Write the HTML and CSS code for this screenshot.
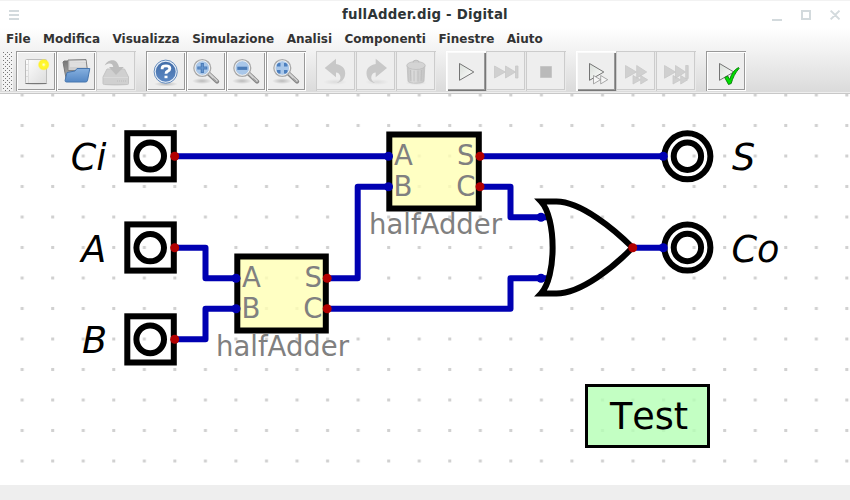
FILE: index.html
```
<!DOCTYPE html>
<html lang="it">
<head>
<meta charset="utf-8">
<title>fullAdder.dig - Digital</title>
<link rel="stylesheet" href="styles.css">
</head>
<body>
<svg class="defs" width="0" height="0" aria-hidden="true">
  <defs>
    <linearGradient id="paper" x1="0" y1="0" x2="1" y2="1"><stop offset="0" stop-color="#fff"/><stop offset="1" stop-color="#dcdcdc"/></linearGradient>
    <radialGradient id="glow"><stop offset="0" stop-color="#fffff0"/><stop offset=".35" stop-color="#fff830"/><stop offset=".75" stop-color="#fff22a"/><stop offset="1" stop-color="#fff22a" stop-opacity="0"/></radialGradient>
    <linearGradient id="folder" x1="0" y1="0" x2="0" y2="1"><stop offset="0" stop-color="#86b0df"/><stop offset="1" stop-color="#5487c4"/></linearGradient>
    <linearGradient id="back" x1="0" y1="0" x2="0" y2="1"><stop offset="0" stop-color="#777"/><stop offset="1" stop-color="#b5b5b5"/></linearGradient>
    <linearGradient id="help" x1="0" y1="0" x2="0" y2="1"><stop offset="0" stop-color="#426da8"/><stop offset="1" stop-color="#5c88c3"/></linearGradient>
    <radialGradient id="shadow"><stop offset="0" stop-color="#000" stop-opacity=".22"/><stop offset="1" stop-color="#000" stop-opacity="0"/></radialGradient>
    <linearGradient id="play" x1="0" y1="0" x2="1" y2="1"><stop offset="0" stop-color="#d9ded9"/><stop offset="1" stop-color="#fff"/></linearGradient>
    <linearGradient id="bin"><stop offset="0" stop-color="#c2c2c2"/><stop offset=".35" stop-color="#dedede"/><stop offset="1" stop-color="#c2c2c2"/></linearGradient>
    <g id="lens">
      <ellipse cx="16" cy="29" rx="10" ry="3" fill="url(#shadow)"/>
      <path d="M22.5 21.5 31 29.5" stroke="#888" stroke-width="4.400" stroke-linecap="round"/>
      <path d="M22.5 21 30.7 28.9" stroke="#d2d2d2" stroke-width="2.2" stroke-linecap="round"/>
      <path d="m27 26.5 3.5 3" stroke="#969696" stroke-width="1"/>
      <circle cx="16.3" cy="16" r="8.2" fill="#a9c7e9" stroke="#aaa" stroke-width="1.8"/>
      <circle cx="16.3" cy="16" r="7.3" fill="none" stroke="#f5f5f5" stroke-width="1"/>
    </g>
    <path id="undo" d="M8.7 16 20 6.7V12c6 1 9.4 4.500 9.200 9.500C29 27 25.500 30.500 20.500 31c3-1.500 4.300-3.700 3.900-6.300C24 22 22 20.600 20 20.500V25.300Z"/>
  </defs>
</svg>

<div class="window">
  <header class="titlebar">
    <svg class="grip" viewBox="0 0 10 10"><path d="M0 1h10M0 5h10M0 9h10"/></svg>
    <h1>fullAdder.dig - Digital</h1>
    <svg class="controls" viewBox="0 0 70 12"><path d="M1 11h10M31 2h8v8h-8zM59.700 1.600l8.800 8.800M68.500 1.600l-8.800 8.800"/></svg>
  </header>

  <div class="chrome">
    <nav class="menu">
      <span>File</span><span>Modifica</span><span>Visualizza</span><span>Simulazione</span><span>Analisi</span><span>Componenti</span><span>Finestre</span><span>Aiuto</span>
    </nav>
    <div class="toolbar">
      <div class="handle"></div>
      <div class="group">
        <button><svg viewBox="1 1 37 37"><ellipse cx="20.500" cy="31.500" rx="13" ry="2" fill="url(#shadow)"/><rect x="9.500" y="7.500" width="21" height="24" rx="1" fill="url(#paper)" stroke="#bcbcbc"/><path d="M9.500 31.500h21" stroke="#777"/><path d="M12.500 8v23" stroke="#d4d4d4" stroke-width=".7"/><path d="M11 12v16" stroke="#c4c4c4" stroke-dasharray="1 5"/><circle cx="27.700" cy="12.700" r="6" fill="url(#glow)"/></svg></button>
        <button><svg viewBox="1 1 37 37"><path d="M7 10 8 9h7l1 2h14l-1 18H10.500Z" fill="url(#back)" stroke="#777"/><path d="m12 8 18-.5 1.500 11H12Z" fill="#cfcfcf" stroke="#858585"/><path d="m14 10 16-.2M14 12h16M14 14h16" stroke="#eee"/><path d="M11 20.500 19 19l2-2.500h12.800L31.500 28.500q-.3 1.500-2 1.500h-19q-1.500 0-1.400-1.500Z" fill="url(#folder)" stroke="#4776ae"/></svg></button>
        <button class="off"><svg viewBox="1 1 37 37"><ellipse cx="20" cy="33" rx="13" ry="1.500" fill="url(#shadow)" opacity=".5"/><path d="M11 17h17.500l4 8v6.500q0 1-1 1h-23q-1.500 0-1.500-1V25Z" fill="#d0d0d0" stroke="#c4c4c4"/><path d="M7.500 25.500h24.500" stroke="#dadada"/><path d="M8.700 13.500C11 7.500 21 5 23 15h4.800L20 23l-7-8h4.300c-.8-4-4-4.500-8.600-1.500Z" fill="#bdbdbd"/><path d="M21 29h9" stroke="#c2c2c2" stroke-width="1.500" stroke-dasharray="1 1"/></svg></button>
      </div>
      <div class="group">
        <button><svg viewBox="1 1 37 37"><ellipse cx="20" cy="32" rx="12" ry="2.500" fill="url(#shadow)"/><circle cx="19.700" cy="19.700" r="11.600" fill="#e6eef8" stroke="#658cbd"/><circle cx="19.700" cy="19.700" r="10" fill="url(#help)"/><path d="M16.200 17.200v-1.300q0-2 3.800-2 3.800 0 3.800 2.600 0 1.700-2 2.600-1.800.8-1.800 2.700" fill="none" stroke="#fff" stroke-width="2.900"/><path d="M18.500 23.700h3v2.500h-3z" fill="#fff"/></svg></button>
        <button><svg viewBox="1 1 37 37"><use href="#lens"/><path d="M16.300 11v10M11.300 16h10" stroke="#4a7bb7" stroke-width="3.200"/><path d="M16.300 12v8M12.300 16h8" stroke="#6a9ad2" stroke-width="1"/></svg></button>
        <button><svg viewBox="1 1 37 37"><use href="#lens"/><path d="M11.300 16.300h10" stroke="#4a7bb7" stroke-width="3.200"/></svg></button>
        <button><svg viewBox="1 1 37 37"><use href="#lens"/><path d="M11 14.500v-2l1.500-1.500h2v3.500zM18 11h2l1.500 1.500v2H18zM11 18h3.500v3.500h-2L11 20zM18 18h3.500v2L20 21.500h-2z" fill="#4c7fbe"/></svg></button>
      </div>
      <div class="group">
        <button class="off"><svg viewBox="1 1 37 37"><ellipse cx="19" cy="30" rx="12" ry="3" fill="url(#shadow)" opacity=".35"/><use href="#undo" fill="#c8c8c8"/></svg></button>
        <button class="off"><svg viewBox="1 1 37 37"><ellipse cx="21" cy="30" rx="12" ry="3" fill="url(#shadow)" opacity=".35"/><use href="#undo" fill="#c8c8c8" transform="matrix(-1 0 0 1 39.700 0)"/></svg></button>
        <button class="off"><svg viewBox="1 1 37 37"><ellipse cx="20" cy="31" rx="11" ry="2" fill="url(#shadow)" opacity=".5"/><path d="M11.200 14h17.600l-.8 15.500c-2 2.200-14 2.200-16 0Z" fill="url(#bin)" stroke="#c0c0c0" stroke-width=".8"/><path d="M14.500 18l.4 11M18 18.500v11M22 18.500v11M25.500 18l-.4 11" stroke="#bebebe"/><ellipse cx="20" cy="13.500" rx="9.200" ry="4" fill="#d4d4d4" stroke="#bdbdbd" stroke-width=".8"/><path d="M17 10.500q0-2.300 3-2.300t3 2.300" fill="#ccc" stroke="#bbb"/></svg></button>
      </div>
      <div class="group">
        <button class="raised"><svg viewBox="1 1 37 37"><path d="m13.500 11.500 14.300 8.500-14.300 8.300Z" fill="url(#play)" stroke="#666" stroke-width=".9"/></svg></button>
        <button class="off"><svg viewBox="1 1 37 37"><path d="m8.500 14 10.800 6-10.800 6ZM19.500 14l10 6-10 6ZM29.500 14h2.500v12h-2.500z" fill="#d0d0d0" stroke="#c8c8c8" stroke-width=".8"/></svg></button>
        <button class="off"><svg viewBox="1 1 37 37"><path d="M14.500 14.500h11v11h-11z" fill="#bababa" stroke="#c6c6c6"/></svg></button>
      </div>
      <div class="group">
        <button class="raised"><svg viewBox="1 1 37 37"><path d="m13.500 11.500 14.300 8.500-14.300 8.300Z" fill="url(#play)" stroke="#666" stroke-width=".9"/><path d="m17.500 23.500 7 4.200-7 4.200ZM24.700 23.500l7 4.200-7 4.200Z" fill="#f6f6f6" stroke="#888" stroke-width=".7"/></svg></button>
        <button class="off"><svg viewBox="1 1 37 37"><path d="m9.500 13.500 11 6.500-11 6.200ZM20.700 13.500l10 6.500-10 6.200ZM17 23.500l7.500 4.300-7.500 4.200ZM24.700 23.500l7 4.300-7 4.200Z" fill="#d0d0d0" stroke="#c8c8c8" stroke-width=".8"/></svg></button>
        <button class="off"><svg viewBox="1 1 37 37"><path d="m8.500 13.500 11 6.500-11 6.200ZM19.500 13.500l10 6.500-10 6.200ZM29.700 13.500h2.500v13h-2.500zM17 23.500l7.500 4.300-7.500 4.200ZM24.700 23.500l7 4.300-7 4.200Z" fill="#d0d0d0" stroke="#c8c8c8" stroke-width=".8"/></svg></button>
      </div>
      <div class="group">
        <button><svg viewBox="1 1 37 37"><path d="m13.500 11.500 14.300 8.500-14.300 8.300Z" fill="url(#play)" stroke="#666" stroke-width=".9"/><path d="m18.700 25.500 3-1.500 2 3.500c1.500-5 4-9.500 8.800-12l.7.800c-4 4.500-6.500 9.700-8 15.200l-2.700 1Z" fill="#00e000" stroke="#087808" stroke-width=".9"/></svg></button>
      </div>
    </div>
  </div>

  <main class="canvas">
    <svg viewBox="0 94 850 391">
      <defs>
        <pattern id="grid" x="6.680" y="110.250" width="30.545" height="30.500" patternUnits="userSpaceOnUse"><rect x="13.970" y="13.750" width="3" height="3" fill="#d0d0d0"/></pattern>
      </defs>
      <rect y="94" width="850" height="391" fill="url(#grid)"/>

      <g class="wire">
        <path d="M174.700 156.200H388.500M174.700 247.700H205.500V278.200H236M174.700 339.300H205.500V308.800H236M327.300 278.200H357.700V186.700H388.500M327.300 308.800H510.500V278.200H541M480 186.700H510.500V217.200H541M480 156.200H663.300M632.700 247.700H663.300"/>
        <path class="stub" d="M541 217.200H548M541 278.200H548"/>
      </g>

      <g class="outline">
        <rect x="127.300" y="133.200" width="46.500" height="46.200"/><ellipse cx="150.200" cy="156" rx="13.800" ry="13.600"/>
        <rect x="127.300" y="224.400" width="46.500" height="46.200"/><ellipse cx="150.200" cy="247.700" rx="13.800" ry="13.600"/>
        <rect x="127.300" y="316.300" width="46.500" height="46.200"/><ellipse cx="150.200" cy="339.300" rx="13.800" ry="13.900"/>
        <rect class="chip" x="389.300" y="134.500" width="89.500" height="74"/>
        <rect class="chip" x="237.300" y="256.500" width="88.500" height="74"/>
        <circle cx="687.400" cy="156.300" r="23"/><circle cx="687.400" cy="156.300" r="13.700"/>
        <circle cx="687.400" cy="247.500" r="23"/><circle cx="687.400" cy="247.500" r="13.700"/>
        <path class="gate" d="M541 201.500H556.500C581 201.500 615 230 632.500 247.500C615 266 581 293.500 556.500 293.500H541C556.500 277 556.500 218 541 201.500Z"/>
      </g>

      <g class="input"><circle cx="388.500" cy="156.200" r="4.500"/><circle cx="388.500" cy="186.700" r="4.500"/><circle cx="236" cy="278.200" r="4.500"/><circle cx="236" cy="308.800" r="4.500"/><circle cx="541" cy="217.200" r="4.500"/><circle cx="541" cy="278.200" r="4.500"/><circle cx="663.300" cy="156.200" r="4.500"/><circle cx="663.300" cy="247.700" r="4.500"/></g>
      <g class="output"><circle cx="174.700" cy="156.200" r="4.500"/><circle cx="174.700" cy="247.700" r="4.500"/><circle cx="174.700" cy="339.300" r="4.500"/><circle cx="327.200" cy="278.200" r="4.500"/><circle cx="327.200" cy="308.800" r="4.500"/><circle cx="480" cy="156.200" r="4.500"/><circle cx="480" cy="186.700" r="4.500"/><circle cx="632.700" cy="247.700" r="4.500"/></g>

      <g class="pin">
        <text x="394" y="165.300">A</text><text x="393.500" y="196">B</text><text x="474.500" y="165.300" class="end">S</text><text x="475.500" y="196" class="end">C</text>
        <text x="242" y="287.300">A</text><text x="241.500" y="318">B</text><text x="322" y="287.300" class="end">S</text><text x="322.500" y="318" class="end">C</text>
        <text x="369" y="234.300" textLength="133">halfAdder</text><text x="216" y="356.300" textLength="133">halfAdder</text>
      </g>
      <g class="label">
        <text x="106.500" y="170" class="end">Ci</text><text x="106.300" y="262" class="end">A</text><text x="107" y="353" class="end">B</text>
        <text x="732" y="170">S</text><text x="731.500" y="262">Co</text>
      </g>
      <g class="test"><rect x="586.500" y="385.500" width="122" height="61"/><text x="649" y="429">Test</text></g>
    </svg>
  </main>
  <footer class="status"></footer>
</div>
</body>
</html>
```
FILE: styles.css
```
* { box-sizing: border-box; }
body { margin: 0; font-family: "DejaVu Sans", sans-serif; background: #fff; }
.defs { display: block; height: 0; }
.window { width: 850px; height: 500px; display: flex; flex-direction: column; overflow: hidden; }

.titlebar {
  height: 28px; padding: 0 9px; border-top: 1px solid #f2f2f2;
  display: grid; grid-template-columns: 70px 1fr 70px; align-items: center;
}
.titlebar h1 { margin: 0; font-size: 13.33px; letter-spacing: .22px; line-height: 26px; font-weight: bold; text-align: center; color: #2e3436; white-space: nowrap; }
.titlebar svg { fill: none; stroke: #d3dadd; stroke-width: 2; }
.grip { width: 10px; height: 10px; }
.controls { width: 70px; height: 12px; }

.chrome { height: 66px; background: linear-gradient(#fff, #dadada); border-bottom: 1px solid #c8c8c8; }
.menu { height: 23px; padding-left: 6px; display: flex; gap: 12.450px; font-size: 12px; line-height: 23px; font-weight: bold; color: #333; }
.toolbar { height: 42px; display: flex; gap: 10px; border-bottom: 1px solid #eee; }
.handle {
  width: 11px; height: 40px; margin: 0 -7px 0 2px;
  background:
    radial-gradient(circle at 1.5px 1.5px, #777 .5px, transparent .9px) 0 0 / 4px 4px,
    radial-gradient(circle at 1.5px 1.5px, #777 .5px, transparent .9px) 2px 2px / 4px 4px,
    #f3f3f3;
}
.group { display: flex; }
button {
  width: 40px; height: 40px; padding: 0; font: inherit; background: #eee;
  border: 1px solid #999; border-right: 0; border-bottom: 0;
  box-shadow: inset 1px 1px #fff, inset -1px -1px #fff, inset -2px -2px #999;
}
button svg { display: block; width: 37px; height: 37px; }
button.off { border-color: #ccc; box-shadow: inset -1px -1px #eaeaea, inset -2px -2px #ccc; }
button.raised { border-color: #fff; box-shadow: inset 1px 1px #fafafa, inset -1px -1px #777, inset -2px -2px #999; }

.canvas { height: 391px; }
.canvas > svg { display: block; width: 850px; height: 391px; }
.wire { fill: none; stroke: #0000b2; stroke-width: 6; stroke-linecap: round; stroke-linejoin: round; }
.stub { stroke-linecap: butt; }
.outline { fill: none; stroke: #000; stroke-width: 6; }
.chip { fill: #ffffb4; fill-opacity: .8; }
.gate { fill: none; stroke-miterlimit: 10; }
.input { fill: #0000b2; }
.output { fill: #b20000; }
.pin { font-size: 27.5px; fill: #808080; }
.label { font-size: 36.6px; font-style: italic; }
.end { text-anchor: end; }
.test rect { fill: #b4ffb4; fill-opacity: .8; stroke: #000; stroke-width: 3; }
.test text { font-size: 36.6px; text-anchor: middle; font-kerning: none; }
.status { flex: 1; background: #eee; }
```
